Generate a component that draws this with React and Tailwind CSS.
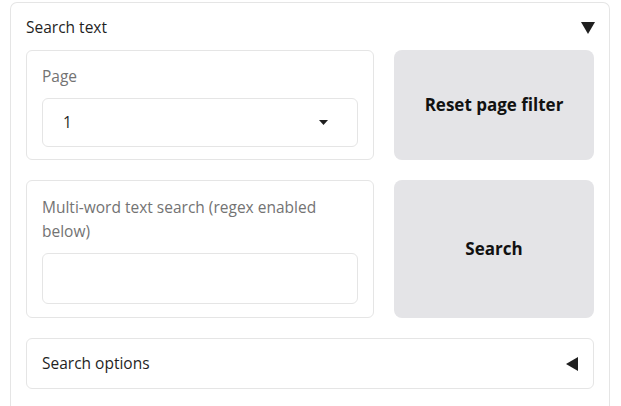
import React, { useState } from "react";

function Triangle({ dir = "down", className = "" }) {
  const pts = dir === "down" ? "0,0 14,0 7,12" : "12,0 12,14 0,7";
  const w = dir === "down" ? 14 : 12;
  const h = dir === "down" ? 12 : 14;
  return (
    <svg width={w} height={h} viewBox={`0 0 ${w} ${h}`} className={className}>
      <polygon points={pts} fill="#1f1f1f" />
    </svg>
  );
}

export default function App() {
  const [page, setPage] = useState("1");
  const [query, setQuery] = useState("");

  return (
    <div
      className="w-[621px] h-[406px] bg-white overflow-hidden pt-[2px] pl-[10px] pr-[11px]"
      style={{ fontFamily: "'Open Sans', 'Liberation Sans', sans-serif" }}
    >
      <div className="border border-[#e5e5e5] border-b-0 rounded-t-[7px] h-[420px] px-[15px]">
        <div className="flex items-center justify-between h-[47px] pt-[2px]">
          <span className="text-[15.5px] text-[#1f1f1f]">Search text</span>
          <Triangle dir="down" className="mr-[-1px]" />
        </div>

        <div className="flex gap-[20px]">
          <div className="w-[348px] h-[110px] border border-[#e5e5e5] rounded-[6px] px-[15px] pt-[14px]">
            <div className="text-[15.5px] text-[#737373] leading-[22px]">Page</div>
            <div className="mt-[11px] h-[49px] border border-[#e5e5e5] rounded-[6px] flex items-center justify-between pl-[20px] pr-[29px]">
              <span className="text-[15.5px] text-[#1f1f1f]">{page}</span>
              <svg width="9" height="5" viewBox="0 0 9 5">
                <polygon points="0,0 9,0 4.5,5" fill="#1f1f1f" />
              </svg>
            </div>
          </div>
          <button
            onClick={() => setPage("1")}
            className="flex-1 h-[110px] bg-[#e4e4e7] rounded-[8px] text-[17px] font-bold text-[#111]"
          >
            Reset page filter
          </button>
        </div>

        <div className="flex gap-[20px] mt-[20px]">
          <div className="w-[348px] h-[138px] border border-[#e5e5e5] rounded-[6px] px-[15px] pt-[14px]">
            <div className="text-[15.5px] text-[#737373] leading-[24px] w-[300px]">
              Multi-word text search (regex enabled below)
            </div>
            <input
              value={query}
              onChange={(e) => setQuery(e.target.value)}
              className="mt-[10px] w-full h-[51px] border border-[#e5e5e5] rounded-[6px] outline-none px-3"
            />
          </div>
          <button className="flex-1 h-[138px] bg-[#e4e4e7] rounded-[8px] text-[17px] font-bold text-[#111]">
            Search
          </button>
        </div>

        <div className="mt-[20px] h-[51px] border border-[#e5e5e5] rounded-[6px] flex items-center justify-between pl-[15px] pr-[15px]">
          <span className="text-[15.5px] text-[#1f1f1f]">Search options</span>
          <Triangle dir="left" />
        </div>
      </div>
    </div>
  );
}
